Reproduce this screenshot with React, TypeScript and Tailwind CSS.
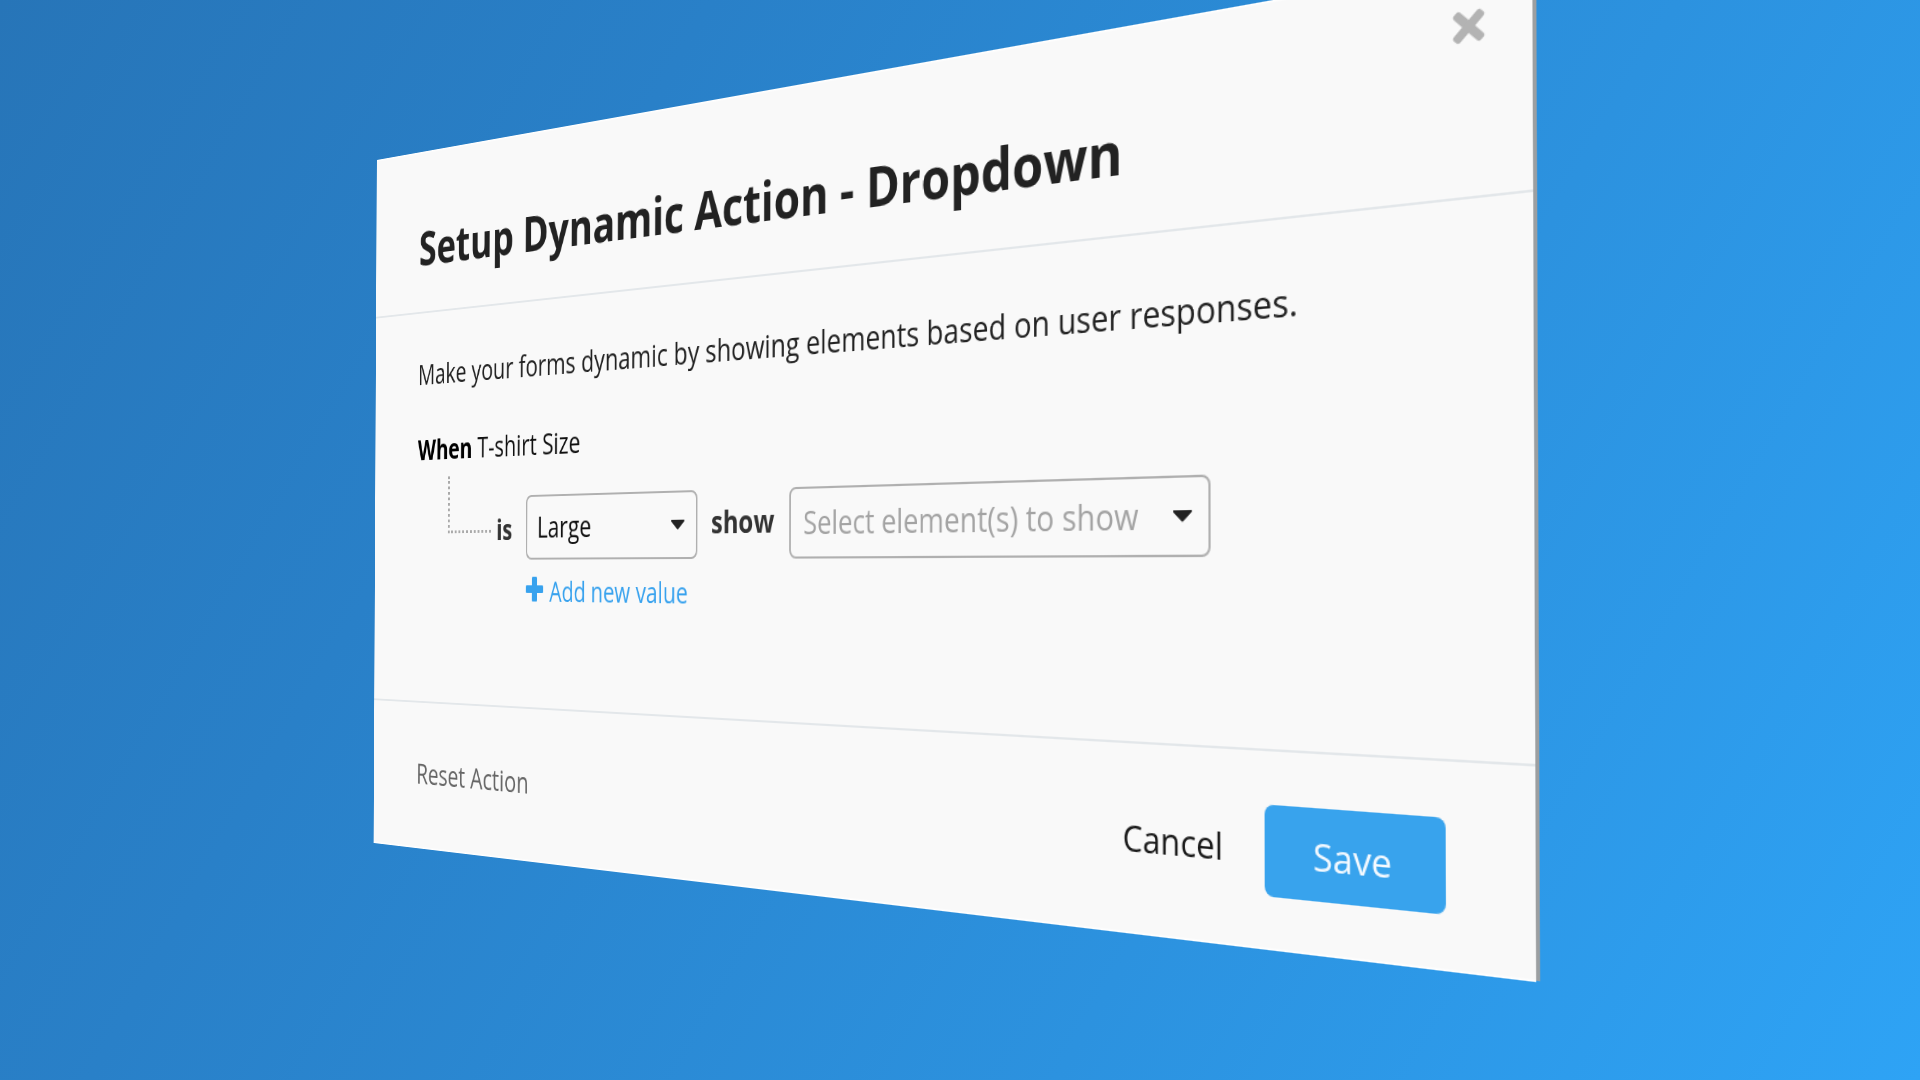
import { CSSProperties, FC, ReactNode } from 'react';

type Point = [number, number];

const PANEL_WIDTH = 1310;
const PANEL_HEIGHT = 768;

// where the panel corners land on the page: top left, top right, bottom right, bottom left
const corners: Point[] = [
  [376.8, 160],
  [1532.4, -46.3],
  [1536.4, 982.3],
  [373.6, 843],
];

const getPerspective = (w: number, h: number, [p0, p1, p2, p3]: Point[]): string => {
  const dx1 = p1[0] - p2[0];
  const dx2 = p3[0] - p2[0];
  const dx3 = p0[0] - p1[0] + p2[0] - p3[0];
  const dy1 = p1[1] - p2[1];
  const dy2 = p3[1] - p2[1];
  const dy3 = p0[1] - p1[1] + p2[1] - p3[1];
  const det = dx1 * dy2 - dx2 * dy1;
  const g = (dx3 * dy2 - dx2 * dy3) / det;
  const k = (dx1 * dy3 - dx3 * dy1) / det;

  const a = (p1[0] - p0[0] + g * p1[0]) / w;
  const b = (p3[0] - p0[0] + k * p3[0]) / h;
  const d = (p1[1] - p0[1] + g * p1[1]) / w;
  const e = (p3[1] - p0[1] + k * p3[1]) / h;

  return `matrix3d(${[a, d, 0, g / w, b, e, 0, k / h, 0, 0, 1, 0, p0[0], p0[1], 0, 1].join(',')})`;
};

const panelStyle: CSSProperties = {
  transform: getPerspective(PANEL_WIDTH, PANEL_HEIGHT, corners),
};

const Caret: FC = () => (
  <svg viewBox="0 0 18 9.5" className="h-[9.5px] w-[18px] shrink-0 fill-[#222]">
    <path d="M.9 0h16.200a.9.9 0 0 1 .6 1.500l-7.700 7.500a1.400 1.400 0 0 1-2 0L.3 1.500A.9.9 0 0 1 .9 0z" />
  </svg>
);

const Select: FC<{ className: string; children: ReactNode }> = ({ className, children }) => (
  <button
    type="button"
    className={`flex h-[68.5px] items-center justify-between rounded-lg border-2 border-[#b0b0b0] pr-[15px] pl-[15px] leading-[44px] whitespace-nowrap ${className}`}
  >
    {children}
    <Caret />
  </button>
);

const App: FC = () => (
  <div className="h-[1080px] w-[1920px] overflow-hidden bg-[linear-gradient(120deg,#2775b8_0%,#2980c8_28%,#2c92df_66%,#2ea3f5_100%)] font-['Open_Sans',sans-serif] text-[#222]">
    {/* the transparent padding keeps the slanted edges smooth */}
    <div style={panelStyle} className="-m-[10px] h-[788px] w-[1330px] origin-[10px_10px] p-[10px]">
      <div className="relative flex h-[768px] w-[1310px] flex-col bg-[#f9f9f9] shadow-[inset_0_1.5px_#fff,inset_0_-1.5px_#fff]">
        <header className="flex h-[178.5px] justify-between border-b-2 border-[#e3e7ea] pt-[76px] pl-[71.5px]">
          <h1 className="text-[52.15px] leading-[60px] font-bold whitespace-nowrap">
            Setup Dynamic Action - Dropdown
          </h1>
          <button type="button" className="-mt-[43px] mr-[35px] h-[28px] w-[28px]">
            <svg viewBox="-14 -14 28 28" className="h-full w-full fill-[#b3b3b3]">
              <rect x="-15" y="-3.5" width="30" height="7" rx="2.2" transform="rotate(45)" />
              <rect x="-15" y="-3.5" width="30" height="7" rx="2.2" transform="rotate(-45)" />
            </svg>
          </button>
        </header>

        <main className="flex-1 pt-[45px] pl-[71px] text-[30.4px] leading-[44px]">
          <p className="text-[30.5px] whitespace-nowrap">
            Make your forms dynamic by showing elements based on user responses.
          </p>
          <p className="mt-[40.5px] whitespace-nowrap text-[#111]">
            <b className="text-black">When</b> T-shirt Size
          </p>
          <div className="flex">
            <div className="mt-[8px] ml-[49px] h-[62px] w-[68px] border-b-3 border-l-3 border-dotted border-[#aaa]" />
            <b className="mt-[44.5px] ml-[8px] w-[44.5px] text-[#333]">is</b>
            <div className="pt-[30.5px]">
              <Select className="w-[240px] text-[#111]">Large</Select>
              <button
                type="button"
                className="mt-[11px] flex items-center gap-[9.5px] text-[28.3px] whitespace-nowrap text-[#38a2ee]"
              >
                <svg viewBox="0 0 26 26" className="-mt-[4px] h-[26px] w-[26px] fill-[#38a2ee]">
                  <path d="M10.500 0h5a1.500 1.500 0 0 1 1.500 1.500V9h7.500A1.500 1.500 0 0 1 26 10.500v5a1.500 1.500 0 0 1-1.500 1.500H17v7.500a1.500 1.500 0 0 1-1.500 1.500h-5A1.500 1.500 0 0 1 9 24.500V17H1.500A1.500 1.500 0 0 1 0 15.500v-5A1.500 1.500 0 0 1 1.500 9H9V1.500A1.500 1.500 0 0 1 10.500 0z" />
                </svg>
                Add new value
              </button>
            </div>
            <b className="mt-[40.5px] w-[116.5px] text-center text-[#333]">show</b>
            <Select className="mt-[30.5px] w-[444.5px] text-[#a3a3a3]">Select element(s) to show</Select>
          </div>
        </main>

        <footer className="flex h-[162px] items-center border-t-2 border-[#e3e7ea] pr-[69.5px] pl-[71px] text-[30.4px] leading-[44px] whitespace-nowrap">
          <button type="button" className="mr-auto pb-[4px] text-[#666]">
            Reset Action
          </button>
          <button type="button" className="mr-[36.5px] text-[#1a1a1a]">
            Cancel
          </button>
          <button type="button" className="h-[74px] w-[151px] rounded-lg bg-[#38a3ed] pt-[3px] text-[#f5faff]">
            Save
          </button>
        </footer>

        {/* visible thickness of the panel */}
        <div className="absolute top-0 bottom-px left-full w-[2.8px] bg-[#9c9fa1]" />
      </div>
    </div>
  </div>
);

export default App;
